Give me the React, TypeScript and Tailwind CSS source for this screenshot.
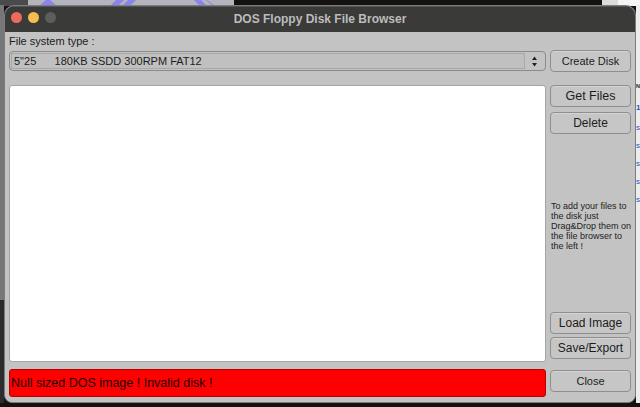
const font = "font-['Liberation_Sans',Arial,sans-serif]";

function Btn({ label, size = "text-[12px]", className = "" }: { label: string; size?: string; className?: string }) {
  return (
    <button className={`flex h-[22px] w-[81px] items-center justify-center rounded-[4px] border border-[#8e8e8e] bg-[#c6c6c6] text-[#1c1c1c] shadow-[inset_0_1px_0_#d4d4d4] ${size} ${className}`}>
      {label}
    </button>
  );
}

function Backdrop() {
  return (
    <div className="absolute inset-0 overflow-hidden bg-[#141210]">
      <div className="absolute left-0 top-0 h-[6px] w-[28px] bg-[#4a4a4c]" />
      <div className="absolute left-[28px] top-0 h-[6px] w-[206px] bg-[#b4b4bc]" />
      <div className="absolute left-[602px] top-0 h-[6px] w-[16px] bg-[#dcdcdc]" />
      <div className="absolute left-[618px] top-0 h-[6px] w-[22px] bg-[#f4f4f4]" />
      <svg className="absolute left-0 top-0" width="240" height="6" viewBox="0 0 240 6">
        <path d="M39 6l7-6h4l7 6zM110 6l6-6h8l-6 6zM122 6l6-6h8l-6 6zM194 0h7l6 6h-7zM206 0h1l8 6h-2z" fill="#8a84ee" />
      </svg>
      <div className="absolute left-0 top-[5px] h-[295px] w-[4px] bg-[#77777a]" />
      <div className="absolute left-0 top-[300px] h-[103px] w-[4px] bg-[#2c2c2c]" />
      <div className="absolute right-0 top-[5px] flex h-[398px] w-[4px] flex-col overflow-hidden bg-[#ececec] text-[8px] text-[#2a4fc0]">
        <div className="h-[74px]" />
        <span className="h-[22px] text-[5.5px] font-bold leading-[14px] text-[#222]">N</span>
        <span className="h-[20px] font-bold leading-[14px]">1</span>
        <span className="h-[18px] leading-[14px]">s</span>
        <span className="h-[18px] leading-[14px]">s</span>
        <span className="h-[18px] leading-[14px]">s</span>
        <span className="h-[18px] leading-[14px]">s</span>
        <span className="h-[18px] leading-[14px]">s</span>
      </div>
    </div>
  );
}

export default function App() {
  return (
    <div className={`relative h-[407px] w-[640px] overflow-hidden ${font}`}>
      <Backdrop />
      <div className="absolute left-[4px] top-[5px] flex h-[398px] w-[632px] flex-col overflow-hidden rounded-t-[10px] rounded-b-[8px] border border-[#7c7c7c] bg-[#c3c3c3]">
        <div className="relative flex h-[26px] shrink-0 items-center justify-center bg-[#3a3a38] shadow-[inset_0_1px_0_#555]">
          <div className="absolute left-[6px] top-[6px] flex gap-[6px]">
            <div className="h-[11px] w-[11px] rounded-full bg-[#ee6a5f]" />
            <div className="h-[11px] w-[11px] rounded-full bg-[#f5bd4f]" />
            <div className="h-[11px] w-[11px] rounded-full bg-[#5d5d5b]" />
          </div>
          <span className="text-[12px] font-bold text-[#bcbcbc]">DOS Floppy Disk File Browser</span>
        </div>

        <div className="flex min-h-0 flex-1 flex-col pl-[4px] pr-[4px]">
          <div className="h-[18px] pt-[3px] text-[11px] leading-[13px] text-[#202020]">File system type :</div>
          <div className="flex h-[22px] items-center gap-[4px]">
            <div className="flex h-[20px] w-[537px] items-center rounded-[4px] border border-[#8a8a8a] bg-[#c3c3c3] p-px">
              <div className="flex h-full flex-1 items-center whitespace-pre border border-[#a8a8a8] bg-[#c0c0c0] pl-[2px] text-[11px] text-[#1c1c1c]">
                5"25      180KB SSDD 300RPM FAT12
              </div>
              <div className="flex h-full w-[19px] items-center justify-center">
                <svg width="7" height="11" viewBox="0 0 7 11">
                  <path d="M3.5 0.5L6 4H1zM3.5 10.5L1 7h5z" fill="#222" />
                </svg>
              </div>
            </div>
            <Btn label="Create Disk" size="text-[11px]" />
          </div>

          <div className="mt-[13px] flex min-h-0 flex-1 gap-[4px]">
            <div className="flex w-[538px] flex-col">
              <div className="h-[277px] rounded-[3px] border border-[#a5a5a5] bg-white" />
              <div className="mt-[7px] flex h-[28px] items-center rounded-[3px] border border-[#b80000] bg-[#fe0000] pl-px text-[12.5px] text-[#1a0000]">
                Null sized DOS image ! Invalid disk !
              </div>
            </div>
            <div className="flex w-[81px] flex-col">
              <Btn label="Get Files" size="text-[12.5px]" />
              <Btn label="Delete" className="mt-[5px]" />
              <div className="mt-[67px] whitespace-nowrap pl-px text-[9px] leading-[10px] text-[#222]">
                To add your files to<br />
                the disk just<br />
                Drag&amp;Drop them on<br />
                the file browser to<br />
                the left !
              </div>
              <Btn label="Load Image" className="mt-auto" />
              <Btn label="Save/Export" className="mt-[3px]" />
              <Btn label="Close" size="text-[11px]" className="mb-[10px] mt-[11px]" />
            </div>
          </div>
        </div>
      </div>
    </div>
  );
}
